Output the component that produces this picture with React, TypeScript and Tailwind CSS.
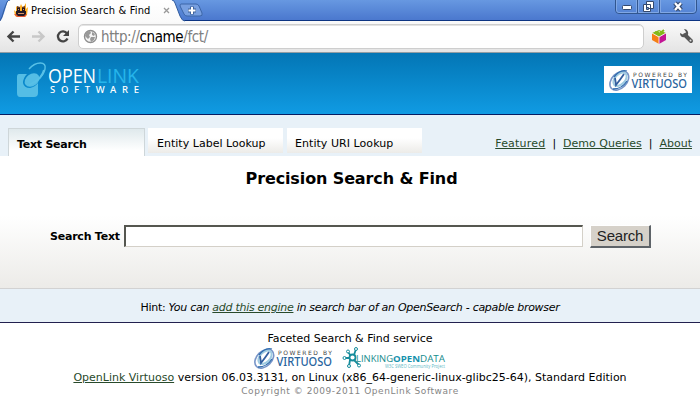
import React from 'react';

function Flame() {
  return (
    <svg className="absolute left-[13px] top-[2px]" width="16" height="16" viewBox="0 0 16 16">
      <path d="M2 14 1 8 3 10 3 4 6 7 8 2 10 6 13 1 13 7 15 5 14 13 12 15H4Z" fill="#ffae20" />
      <path d="M1 12h13l-2 3H4z" fill="#e45a35" />
      <path d="M4 6h3v3H4zM9 6h3v3H9zM3 9h10v3l-2 2H5l-2-2z" fill="#251a24" />
      <path d="M4 4l3 1v1H4zM12 4 9 5v1h3z" fill="#6b3a20" />
      <path d="M5 7h1v1H5zM10 7h1v1h-1zM5 11h6v1H5z" fill="#d79568" />
    </svg>
  );
}

function TitleBar() {
  return (
    <div className="relative h-[21px] border-b border-[#0c3482] bg-linear-to-b from-[#6798e1] to-[#4b78ce]">
      <svg className="absolute left-0 top-0" width="212" height="22">
        <defs>
          <linearGradient id="tab" x2="0" y2="1"><stop stopColor="#fff" /><stop offset="1" stopColor="#fafafa" /></linearGradient>
        </defs>
        <path d="M0 21C2 20 3 16 5 10L7 3Q8 0 11 0H171Q174 0 175 3L180 16Q182 21 185 21V22H0Z" fill="url(#tab)" />
        <path d="M0 20.5Q2 18 4 10L7 2Q8 0 10 0M172 0Q174 0 175 3L180 16Q182 21 185 21" fill="none" stroke="#315c9e" />
        <path d="M181 4H196Q198 4 199 6L202 13Q203 16 200 16H187Q185 16 184 14L180 6Q180 4 181 4Z" fill="#779fe0" stroke="#3c66a8" />
        <path d="M192 6.5V14.500M188 10.500H196" stroke="#41649b" strokeWidth="4" />
        <path d="M192 7V14M188.500 10.500H195.500" stroke="#fff" strokeWidth="2" />
        <path d="m164 8 5 5m0-5-5 5" stroke="#999" strokeWidth="1.300" />
      </svg>
      <Flame />
      <span className="absolute left-[31px] top-[3px] whitespace-nowrap font-['DejaVu_Sans_Condensed','Noto_Sans',sans-serif] text-[11px] leading-[15px] tracking-[0.18px] text-black">Precision Search &amp; Find</span>
      <svg className="absolute right-0 top-0" width="146" height="15">
        <path d="M61.500 0V10Q61.500 13.500 65 13.500H139Q142.500 13.500 142.500 10V0M83.500 0V13M105.500 0V13" fill="none" stroke="#31568f" />
        <path d="M62.500 0V10Q62.500 12.500 65 12.500H82.500V0M84.500 0V12.500H104.500V0M106.500 0V12.500H138Q141.500 12.500 141.500 10V0" fill="none" stroke="#80a7e4" />
        <rect x="68.500" y="5.500" width="9" height="4" rx="1" fill="#fff" stroke="#34496e" />
        <path d="M92.500 1.500h7v7h-7zM89.500 4.500h7v7h-7z" fill="#fff" stroke="#34496e" />
        <path d="M92.500 7.500h2v2h-2z" fill="#6f98da" stroke="#34496e" />
        <path d="m121 3 6 7m0-7-6 7" stroke="#34496e" strokeWidth="4.500" />
        <path d="m121 3 6 7m0-7-6 7" stroke="#fff" strokeWidth="2.200" />
      </svg>
    </div>
  );
}

function Toolbar() {
  return (
    <div className="flex h-8 border-b border-[#929da4] bg-linear-to-b from-[#fafafa] to-[#e4e4e4] pt-[3px]">
      <svg className="shrink-0" width="78" height="25">
        <path d="M20 12.500H9M13.500 7.500l-5 5 5 5" fill="none" stroke="#444" strokeWidth="2.400" />
        <path d="M32 12.500h11M38.500 7.500l5 5-5 5" fill="none" stroke="#c8c8c8" strokeWidth="2.400" />
        <path d="M67 9.500A5 5 0 1 0 67.500 14.500" fill="none" stroke="#444" strokeWidth="2.300" />
        <path d="M69 6v6h-6z" fill="#444" />
      </svg>
      <div className="flex h-[25px] w-[566px] items-center rounded-[5px] border border-[#cecece] bg-white pl-1 shadow-[inset_0_1px_0_#e4e4e4]">
        <svg width="15" height="15" viewBox="0 0 15 15">
          <circle cx="7.500" cy="7.500" r="6" fill="#f4f4f4" stroke="#8e8e8e" strokeWidth="1.400" />
          <path d="M3 3 7 2 8 4 6 6 7 8 5 10 2 7ZM9 3l3 2-1 2-2-1ZM8 8l4 0-1 3-3 2-1-3Z" fill="#999" />
        </svg>
        <span className="ml-[3px] whitespace-nowrap font-['DejaVu_Sans_Condensed','Noto_Sans',sans-serif] text-[15px] leading-5 tracking-[-0.4px] text-[#808080]">http://<span className="text-black">cname</span>/fct/</span>
      </div>
      <svg className="shrink-0" width="56" height="25">
        <path d="m8 9 7-3 7 3-7 4Z" fill="#83b81a" /><path d="m8 9 7 4v7l-7-4Z" fill="#f57d16" /><path d="m22 9-7 4v7l7-4Z" fill="#c31595" />
        <path d="m15 7 1 3 5-5M8 9l7 4 7-4M15 13v7" stroke="#fff" strokeWidth=".8" fill="none" />
        <path d="m11 8 4 2 5-4" stroke="#83b81a" strokeWidth="2" fill="none" />
        <path d="M41 11 47 17" stroke="#555" strokeWidth="4" strokeLinecap="round" />
        <path d="M36 9q0 5 5 4 4-1 3-5-1-3-4-3l2 3-2 3Z" fill="#555" /><circle cx="46.500" cy="16.500" r="1" fill="#ddd" />
      </svg>
    </div>
  );
}

function OpenLinkLogo() {
  return (
    <svg className="overflow-visible" width="126" height="38" viewBox="0 0 126 38">
      <path d="M3 14H11Q7 18 7 23q1 5 7 5 5-1 8-5v10q0 4-4 4H4q-3 0-3-4V17q0-3 2-3Z" fill="#54bde5" />
      <ellipse cx="16" cy="20" rx="8" ry="6" transform="rotate(-36 16 20)" fill="#54bde5" />
      <path d="M13 9C20 1 31 1 29 9 28 15 21 22 13 25" fill="none" stroke="#58c1e7" strokeWidth="1.500" />
      <path d="M28 10Q26 18 17 23" fill="none" stroke="#58c1e7" strokeWidth="2" />
      <g fontFamily="'Open Sans','Noto Sans',sans-serif">
        <text x="32" y="22.500" fontSize="20" fontWeight="500" textLength="48" lengthAdjust="spacingAndGlyphs" fill="#fff">OPEN</text>
        <text x="81" y="22.500" fontSize="20" textLength="42" lengthAdjust="spacingAndGlyphs" fill="#26b5eb">LINK</text>
      </g>
      <text x="34" y="33" fontFamily="'Noto Sans',sans-serif" fontSize="9.500" fontWeight="500" textLength="89" fill="#fff">SOFTWARE</text>
    </svg>
  );
}

function Virtuoso() {
  return (
    <svg className="overflow-visible" width="80" height="22" viewBox="0 0 80 22">
      <g fill="none" transform="rotate(-45 11 11)">
        <ellipse cx="10" cy="11" rx="11" ry="7.500" stroke="#7895c8" strokeWidth="1.600" />
        <ellipse cx="11.500" cy="10.500" rx="8" ry="5" stroke="#9fcbe1" strokeWidth="2" />
      </g>
      <path d="m6 9 1 7Q11 11 15 5" fill="none" stroke="#345f9f" strokeWidth="1.800" />
      <path d="M4 20Q13 20 18 12M5 8Q11 0 18 2" fill="none" stroke="#306cad" strokeWidth="1.300" />
      <text x="24" y="7.500" fontFamily="'DejaVu Sans',sans-serif" fontSize="6" textLength="54" fill="#444">POWERED BY</text>
      <text x="22.500" y="19" fontFamily="'Noto Sans',sans-serif" fontSize="12.500" fontWeight="500" textLength="55.500" lengthAdjust="spacingAndGlyphs" fill="#28649e">VIRTUOSO</text>
    </svg>
  );
}

function LinkingOpenData() {
  return (
    <svg className="overflow-visible" width="104" height="24" viewBox="0 0 104 24">
      <path d="M3 11h5M9 9 6 5m6 3 2-6m-6 11-1 6m5-6 5 5" stroke="#168c9c" strokeWidth="1.800" />
      <circle cx="10.500" cy="10.500" r="3" fill="#fff" stroke="#168c9c" strokeWidth="1.800" />
      <g fill="#fff" stroke="#168c9c"><circle cx="2.500" cy="11" r="1.500" /><circle cx="6" cy="4.500" r="1.500" /><circle cx="14" cy="2" r="1.500" /><circle cx="7" cy="19" r="1.500" /><circle cx="17" cy="18.500" r="1.500" /></g>
      <g fontFamily="'Open Sans','Noto Sans',sans-serif" fontSize="9.500">
        <text x="14" y="15" fontWeight="500" textLength="37" lengthAdjust="spacingAndGlyphs" fill="#168c8d">LINKING</text>
        <text x="51" y="15" fontWeight="700" textLength="27" lengthAdjust="spacingAndGlyphs" fill="#1691ad">OPEN</text>
        <text x="78" y="15" fontWeight="500" textLength="25" lengthAdjust="spacingAndGlyphs" fill="#168c8d">DATA</text>
        <text x="43" y="20.500" fontSize="5" textLength="60" lengthAdjust="spacingAndGlyphs" fill="#5bb8c5">W3C SWEO Community Project</text>
      </g>
    </svg>
  );
}

export default function App() {
  return (
    <div className="h-[411px] w-[700px] overflow-hidden bg-white font-['DejaVu_Sans',sans-serif] text-[11px] text-black">
      <TitleBar />
      <Toolbar />
      <header className="flex h-[62px] justify-between border-b border-[#061c62] bg-linear-to-b from-[#0476b5] to-[#109be3] pl-4 pr-2 pt-[7px]">
        <OpenLinkLogo />
        <div className="mt-[6px] h-[27px] w-[88px] bg-white pl-[5px] pt-[3px]"><Virtuoso /></div>
      </header>
      <nav className="flex h-[41px] bg-[#e8f1f8] pl-2 pr-2 pt-[13px] leading-4">
        <div className="h-7 w-[137px] border-x border-t border-[#ced6d9] bg-linear-to-b from-[#dfe9ec] to-white to-80% pl-2 pt-2 tracking-[-0.25px] font-bold">Text Search</div>
        <div className="ml-[3px] h-[25px] w-[135px] bg-linear-to-b from-white from-40% to-[#ecebe8] pl-[9px] pt-[8px] tracking-[0.02px]">Entity Label Lookup</div>
        <div className="ml-1 h-[25px] w-[135px] bg-linear-to-b from-white from-40% to-[#ecebe8] pl-2 pt-[8px] tracking-[0.05px]">Entity URI Lookup</div>
        <div className="ml-auto flex gap-[7px] whitespace-nowrap pt-2 text-[#284a2b]"><a className="tracking-[0.2px] underline">Featured</a><span className="text-black">|</span><a className="underline">Demo Queries</a><span className="text-black">|</span><a className="underline">About</a></div>
      </nav>
      <main className="h-[133px] border-b border-[#d2d2d2] bg-linear-to-b from-white from-45% to-[#ecebe8] pt-[12px]">
        <h1 className="pl-[3px] text-center text-[16px] font-bold leading-[22px] tracking-[-0.12px]">Precision Search &amp; Find</h1>
        <div className="flex pt-[35px]">
          <label className="w-[124px] whitespace-nowrap pl-[50px] pt-[4px] font-bold leading-4 tracking-[-0.22px]">Search Text</label>
          <input className="h-[22px] w-[459px] border-b border-l-2 border-r border-t-2 border-b-[#d4d0c8] border-l-[#55564f] border-r-[#d4d0c8] border-t-[#55564f] bg-white" />
          <button className="ml-[7px] h-[23px] w-[61px] border-b-2 border-l border-r-2 border-t border-b-[#5e6368] border-l-white border-r-[#5e6368] border-t-white bg-[#d6d1c9] pb-px font-['Liberation_Sans',sans-serif] text-[15px] leading-5 tracking-[-0.2px] text-[#222]">Search</button>
        </div>
      </main>
      <div className="h-[34px] border-b border-[#22204f] bg-[#e8f1f8] pt-[11px] text-center leading-4 tracking-[-0.28px]">Hint: <i>You can <a className="text-[#284a2b] underline">add this engine</a> in search bar of an OpenSearch - capable browser</i></div>
      <footer className="flex flex-col items-center pt-[8px]">
        <p className="leading-4">Faceted Search &amp; Find service</p>
        <div className="flex h-[23px] gap-[8px]"><Virtuoso /><LinkingOpenData /></div>
        <p className="whitespace-nowrap leading-4"><a className="text-[#284a2b] underline">OpenLink Virtuoso</a> version 06.03.3131, on Linux (x86_64-generic-linux-glibc25-64), Standard Edition</p>
        <p className="-mt-px whitespace-nowrap text-[9px] leading-3 tracking-[0.56px] text-[#858585]">Copyright © 2009-2011 OpenLink Software</p>
      </footer>
    </div>
  );
}
